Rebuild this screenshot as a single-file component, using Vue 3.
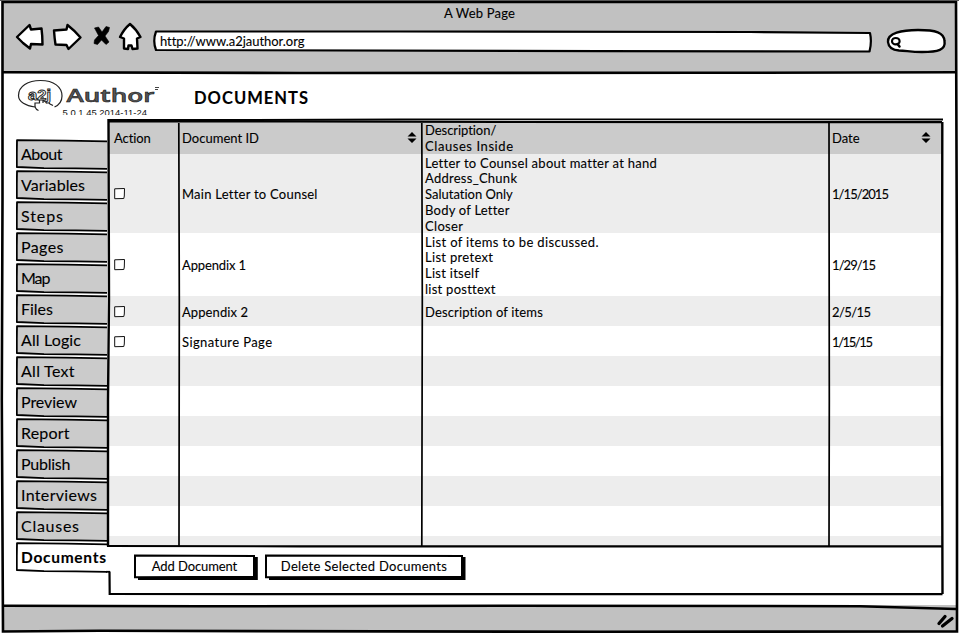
<script setup>
const tabs = [
  ['About', 41.5], ['Variables', 64], ['Steps', 42], ['Pages', 42.5], ['Map', 29.5],
  ['Files', 32], ['All Logic', 60], ['All Text', 53.5], ['Preview', 56], ['Report', 48.5],
  ['Publish', 49.5], ['Interviews', 76], ['Clauses', 58], ['Documents', 85],
].map(([label, width]) => ({ label, width, active: label === 'Documents' }))

const rows = [
  {
    id: ['Main Letter to Counsel', 135], date: ['1/15/2015', 57],
    lines: [['Letter to Counsel about matter at hand', 231], ['Address_Chunk', 92], ['Salutation Only', 88], ['Body of Letter', 84], ['Closer', 38]],
  },
  {
    id: ['Appendix 1', 64], date: ['1/29/15', 44],
    lines: [['List of items to be discussed.', 173.5], ['List pretext', 68], ['List itself', 54], ['list posttext', 70]],
  },
  { id: ['Appendix 2', 66], date: ['2/5/15', 39], lines: [['Description of items', 118]] },
  { id: ['Signature Page', 90], date: ['1/15/15', 41], lines: [] },
]

// Tracks a label so that it spans the given width.
const vFit = {
  mounted(el, { value }) {
    const natural = el.getBoundingClientRect().width
    const gaps = Math.max(1, el.textContent.length - 1)
    el.style.letterSpacing = `${(value - natural) / gaps}px`
  },
}
</script>

<template>
  <div class="window">
    <header class="chrome">
      <div class="title"><span v-fit="71">A Web Page</span></div>
      <div class="toolbar">
        <svg class="nav" width="130" height="34" viewBox="14 20 130 34">
          <g fill="#fff" stroke="#000" stroke-width="2.4" stroke-linejoin="round">
            <path d="M17 37 29.500 25 31 29.500 41.500 28.500 Q42.500 36 42.500 44.500L31 44 30 48.500 23 43Z" />
            <path d="M54 30.500 66.500 29.500 67.500 25 Q74 30 80.500 37.500L68.500 49 66.500 45 55.500 44.500Q54.500 38 54 30.500Z" />
            <path d="M130 24 Q124 29 120 37 L124 38.500 124 48.500 128 49 128.500 45.500 131.500 45.500 132.500 49 137.500 48.500 137 38.500 140.500 37Q136 29 130 24Z" />
          </g>
          <path d="M94.500 28 98.500 27 102 32 106 26.500 109.500 27.500 108.500 31.500 105 36 109 42 106 44.500 101.500 40 97.500 44.500 94 43.500 94.500 40 98.500 35.500Z" stroke="#000" stroke-width=".6" stroke-linejoin="round" />
        </svg>
        <div class="address">
          <svg class="back" width="720" height="24" viewBox="153 30 720 24">
            <path d="M156 31.500 L400 31.500 L750 32 870 33 Q872 42 869.500 51.500 L600 51.200 156 50 Q152.500 41 156 31.500Z" fill="#fff" stroke="#000" stroke-width="2.200" stroke-linejoin="round" />
          </svg>
          <span v-fit="144">http://www.a2jauthor.org</span>
        </div>
        <svg class="search" width="62" height="28" viewBox="885 27 62 28">
          <path d="M888 42C887 33 902 30 918 30C936 30 944 32.500 944.500 41C946 50 938 52 922 52C910 52 906 50.500 899 50.500C892 50 888.500 47 888 42Z" fill="#fff" stroke="#000" stroke-width="2.400" />
          <ellipse cx="895.800" cy="41.200" rx="3.800" ry="3.200" fill="none" stroke="#000" stroke-width="2.200" />
          <path d="M897.500 44 899.500 46.500" stroke="#000" stroke-width="2.500" stroke-linecap="round" />
        </svg>
      </div>
    </header>

    <main>
      <div class="heading">
        <svg class="logo" width="146" height="42" viewBox="15 76 146 42">
          <g fill="none" stroke="#222" stroke-width="1.200">
            <path d="M38.500 110.500 Q36 109.500 35 107C26 106 18.500 102 18.500 95.500C18.500 86 28 80.500 40.500 80.500C54 80.500 62 87 62 96C62 101 59 105 54.500 107" />
            <path d="M35 107V103H39.500V98M43 97V103M43 100 47 103M47 101 50 104 53 105.500" />
          </g>
          <text class="mark" x="28" y="100" textLength="23" lengthAdjust="spacingAndGlyphs">a2j</text>
          <text class="brand" x="66.500" y="102" textLength="88" lengthAdjust="spacingAndGlyphs">Author</text>
          <path d="M155 87.500H159M155 89.500H158" stroke="#444" />
          <svg x="60" y="104" width="92" height="11" viewBox="60 104 92 11">
            <text class="version" x="62.500" y="116" textLength="84.500" lengthAdjust="spacingAndGlyphs">5.0.1.45 2014-11-24</text>
          </svg>
        </svg>
        <h1><span v-fit="114">DOCUMENTS</span></h1>
      </div>

      <div class="body">
        <nav class="tabs">
          <a v-for="tab in tabs" :key="tab.label" class="tab" :class="{ active: tab.active }">
            <svg class="back" width="96" height="31" viewBox="0 0 96 31">
              <path class="face" d="M.7 1.500 91 2.500V29.700L60 29.500 .7 28Z" />
              <path class="edge" d="M91 2.300 50 1.700 1 1.200 .8 14 .8 28 28 29.200 60 29.400 91 29.800" />
              <path v-if="tab.active" class="edge" d="M90 29.800H94" />
            </svg>
            <span v-fit="tab.width">{{ tab.label }}</span>
          </a>
        </nav>

        <section class="panel">
          <div class="grid">
            <div class="row head">
              <div><span v-fit="37">Action</span></div>
              <div class="sortable">
                <span v-fit="77">Document ID</span>
                <svg width="10" height="11"><path d="M0.500 4.500 5 0 9.500 4.500ZM0.500 6.500H9.500L5 11Z" /></svg>
              </div>
              <div class="stack"><span v-fit="71.5">Description/</span><span v-fit="88">Clauses Inside</span></div>
              <div class="sortable">
                <span v-fit="27.5">Date</span>
                <svg width="10" height="11"><path d="M0.500 4.500 5 0 9.500 4.500ZM0.500 6.500H9.500L5 11Z" /></svg>
              </div>
            </div>
            <div v-for="row in rows" :key="row.id[0]" class="row">
              <div>
                <svg width="12" height="12" class="check"><path d="M.7 .8 10.500 .5 10.300 8 9.800 10.500 .7 10.700Z" fill="#fff" stroke="#111" /></svg>
              </div>
              <div><span v-fit="row.id[1]">{{ row.id[0] }}</span></div>
              <div class="stack"><span v-for="line in row.lines" :key="line[0]" v-fit="line[1]">{{ line[0] }}</span></div>
              <div><span v-fit="row.date[1]">{{ row.date[0] }}</span></div>
            </div>
            <div v-for="n in 7" :key="n" class="row"></div>
          </div>
          <div class="actions">
            <button>
              <svg class="back" width="126" height="28"><path d="M4 24H121.800V3" class="shade" /><path d="M1 1.500 60 1.700 120 2V22.800L1 23.200Z" class="plate" /></svg>
              <span v-fit="85.5">Add Document</span>
            </button>
            <button class="wide">
              <svg class="back" width="203" height="28"><path d="M4 24H198.500V3" class="shade" /><path d="M1 1.500 100 1.700 197 2V22.800L1 23.200Z" class="plate" /></svg>
              <span v-fit="166">Delete Selected Documents</span>
            </button>
          </div>
        </section>
      </div>
    </main>

    <footer></footer>

    <svg class="ink" width="959" height="634" viewBox="0 0 959 634">
      <path d="M4 605.700 200 606.300 500 605.700 860 606.200 956 609" stroke-width="2.400" />
      <path d="M2.500 2 500 2 956 2 957 300 957 631.500 600 631.800 100 630.800 3 631.500 1.800 400 2.500 200Z" stroke-width="2.600" />
      <path d="M0 .5H959" stroke="#555" stroke-width="1" />
      <path d="M3 72.300 300 73 700 72.800 957 72.300" stroke-width="2.600" />
      <path d="M108 120 250 120 400 119.500 650 119.300 943 119.500" stroke-width="1.800" />
      <path d="M108 121.500H300L500 122 942 122.200" stroke-width="2.200" />
      <path d="M108.500 119 109 300 108 400 108 546.200 M942.300 122 942 400 942.500 594" stroke-width="2.400" />
      <path d="M107 546 300 546.300 942 546.300" stroke-width="2.200" />
      <path d="M178.800 123 179.300 300 179 546 M421.800 123 422.300 300 421.800 546 M829 123 829.300 400 829 546" stroke-width="1.700" />
      <path d="M109.500 571.500 109.700 594 400 594.200 942.500 594.200" stroke-width="2.200" />
      <path d="M939 623.500 945 616.500M942.500 626 952 618.500" stroke-width="3.300" stroke-linecap="round" />
    </svg>
  </div>
</template>

<style>
body { margin: 0; background: #fff; }
</style>

<style scoped>
.window {
  position: relative;
  box-sizing: border-box;
  width: 959px;
  height: 634px;
  overflow: hidden;
  display: grid;
  grid-template-rows: 72px 1fr 26px;
  padding: 1px 2px 3px;
  background: #fff;
  color: #000;
  font: 13px/15.8px Lato, "Open Sans", sans-serif;
  -webkit-text-stroke: 0.1px #000;
}
span { display: inline-block; white-space: nowrap; }
svg { display: block; flex: none; }
.back { position: absolute; left: 0; top: 0; z-index: 0; }
.back + span { position: relative; z-index: 1; }
.ink { position: absolute; inset: 0; pointer-events: none; fill: none; stroke: #000; }
.chrome, footer { background: #c1c1c1; }
.title { box-sizing: border-box; text-align: center; padding-top: 5px; height: 19px; }
.toolbar { display: flex; align-items: flex-start; padding-left: 12px; }
.nav { margin-right: 9px; }
.address { position: relative; width: 713px; height: 24px; margin: 10px 19px 0 0; padding-left: 7px; line-height: 22px; box-sizing: border-box; }
.search { margin-top: 7px; }
main { min-height: 0; }
.heading { display: flex; height: 46px; padding-left: 13px; }
.logo { margin-top: 3px; }
.mark { font: bold 15px "Liberation Sans", sans-serif; fill: #fff; stroke: #222; stroke-width: 0.9px; }
.brand { font: 600 17.500px "Open Sans", sans-serif; fill: #555; stroke: #111; stroke-width: 0.5px; }
.version { font: 9px "Liberation Sans", sans-serif; fill: #111; }
h1 { margin: 13px 0 0 33px; font-size: 16.5px; line-height: 24px; font-weight: 700; }
.body { display: flex; padding-left: 14px; }
.tabs { width: 92px; padding-top: 20px; flex: none; }
.tab { position: relative; display: block; height: 31px; padding-left: 5px; font-size: 16px; line-height: 30px; box-sizing: border-box; }
.face { fill: #cbcbcb; }
.active .face { fill: #fff; }
.edge { fill: none; stroke: #000; stroke-width: 1.8; stroke-linejoin: round; }
.active { font-weight: 700; font-size: 15.5px; }
.panel { width: 835px; }
.grid { height: 427px; padding-top: 3px; box-sizing: border-box; overflow: hidden; }
.row { display: grid; grid-template-columns: 71px 243px 407px 114px; align-items: center; min-height: 30px; }
.row > div { padding-left: 3px; }
.row > div:first-child { padding-left: 6px; }
.row span { transform: translateY(1.6px); }
.head span { transform: translateY(1px); }
.check { transform: translateY(1px); }
.row:nth-child(even) { background: #ededed; }
.head { background: #cbcbcb; }
.stack { display: flex; flex-direction: column; align-items: flex-start; }
.sortable { display: flex; justify-content: space-between; align-items: center; padding-right: 5px; }
.sortable:last-child { padding-right: 12px; }
.actions { display: flex; gap: 5px; padding: 8px 0 0 26px; }
button { position: relative; width: 126px; height: 28px; padding: 0 5px 3px 0; border: 0; background: none; color: inherit; font: inherit; }
.wide { width: 203px; }
.shade { fill: none; stroke: #000; stroke-width: 4; }
.plate { fill: #fff; stroke: #000; stroke-width: 2; }
</style>
